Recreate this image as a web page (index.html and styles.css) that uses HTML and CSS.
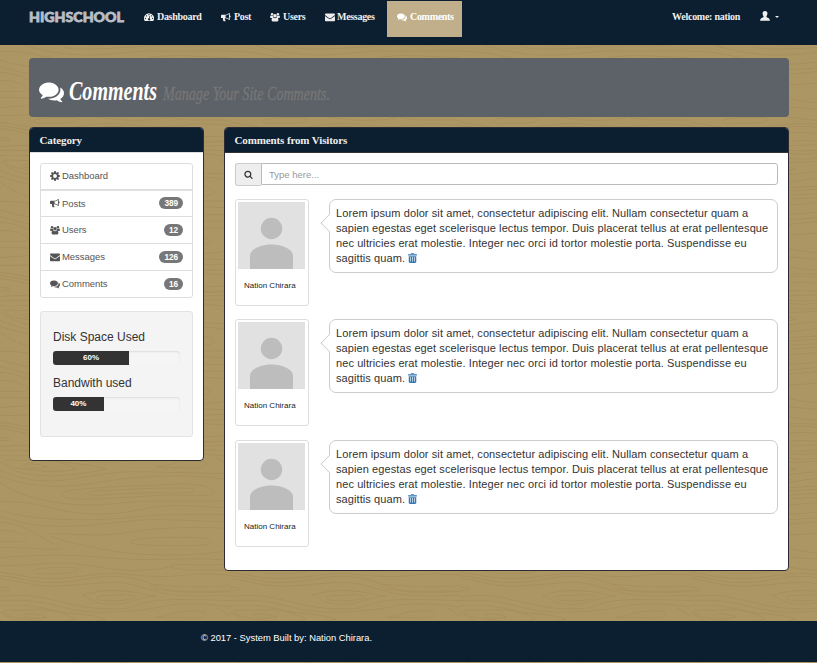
FILE: index.html
```html
<!DOCTYPE html>
<html lang="en">
<head>
<meta charset="utf-8">
<title>Comments</title>
<link rel="stylesheet" href="styles.css">
</head>
<body>
<svg class="wood" aria-hidden="true">
  <defs>
    <g id="grain">
      <path d="M0 82C60 125 140 143 230 149S400 136 460 138S630 137 690 138M0 139C90 137 130 158 220 172S380 172 450 158S620 158 690 158M0 165C80 193 190 195 280 194S430 180 510 179S620 180 690 178M0 185C60 198 80 213 180 214S380 196 450 194S620 202 690 198M0 202C70 204 100 236 150 260S195 283 160 283S60 276 0 278M0 226C50 226 85 242 83 253S30 258 0 259M690 220C590 216 480 216 400 230S270 240 200 237S145 242 172 251S320 290 400 296S620 303 690 284M390 262C390 250 470 247 520 247S630 246 632 259S590 272 540 272S395 272 390 262ZM0 308C100 299 210 298 300 306S420 315 500 313S620 310 690 316M0 331C80 334 120 323 200 325S320 348 420 346S500 325 560 328S650 330 690 326M510 337C570 350 620 343 690 346M100 350C94 341 150 337 185 337S240 338 232 346S180 356 150 356S105 358 100 350ZM0 352C70 360 100 375 180 370S300 350 380 358S500 367 560 360S640 359 690 360M0 362C60 366 100 387 180 382S300 356 380 367S480 410 560 412S650 411 690 410M0 371C60 375 90 396 170 393S290 382 340 382S430 400 480 412S590 425 690 420M690 392C600 398 550 395 500 391S445 387 460 398S530 410 690 408M0 397C20 397 35 402 30 405S10 407 0 407M247 420C300 405 340 404 390 410S430 422 467 423C410 428 390 448 340 448S280 438 247 420ZM290 428C285 420 330 422 360 420S407 422 407 426S370 438 340 438S293 436 290 428ZM0 425C90 415 120 427 180 440S270 462 340 462S410 445 460 438S600 433 690 437M0 437C100 430 150 448 200 460S300 475 390 468S480 452 530 448S640 447 690 456"/>
      <path d="M10 20C5 10 65 20 100 15S200 23 228 42C180 55 110 48 70 42S25 30 10 20ZM70 32C68 24 110 24 140 36C120 42 75 42 70 32ZM0 20C40 50 75 60 130 62S240 58 318 43C270 25 210 28 170 18S60-6 0 2M467 36C510 34 510 20 570 18S615 26 612 34S560 38 520 38S470 40 467 36ZM650 8L690 32M0 46C50 64 80 78 150 78S310 50 400 50S610 57 690 55M0 64C50 80 90 93 170 94S330 72 420 67S600 58 690 76M186 118C180 105 250 101 330 96S450 93 520 88S645 97 641 113S550 116 470 121S340 131 280 132S190 132 186 118ZM260 117C252 106 330 106 390 103S585 94 585 106S520 112 430 114S270 126 260 117Z"/>
    </g>
    <pattern id="planks" width="690" height="450" patternUnits="userSpaceOnUse" patternTransform="translate(0 5) scale(.33333)">
      <use href="#grain"/><use href="#grain" y="-450"/>
    </pattern>
  </defs>
  <rect width="100%" height="100%" fill="url(#planks)"/>
</svg>

<svg class="sprite" aria-hidden="true">
  <symbol id="comments" viewBox="0 0 1792 1792"><path d="M1408 768q0 139-94 257t-256.5 186.5-353.5 68.5q-86 0-176-16-124 88-278 128-36 9-86 16h-3q-11 0-20.5-8t-11.5-21q-1-3-1-6.5t.5-6.5 2-6l2.5-5 3.5-5.5 4-5 4.500-5 4-4.500q5-6 23-25t26-29.500 22.500-29 25-38.500 20.500-44q-124-72-195-177t-71-224q0-139 94-257t256.500-186.500 353.500-68.500 353.500 68.500 256.500 186.500 94 257zm384 256q0 120-71 224.500t-195 176.500q10 24 20.500 44t25 38.500 22.500 29 26 29.500 23 25q1 1 4 4.500t4.500 5 4 5 3.500 5.500l2.500 5 2 6 .5 6.500-1 6.500q-3 14-13 22t-22 7q-50-7-86-16-154-40-278-128-90 16-176 16-271 0-472-132 58 4 88 4 161 0 309-45t264-129q125-92 192-212t67-254q0-77-23-152 129 71 204 178t75 230z"/></symbol>
  <symbol id="search" viewBox="0 0 1792 1792"><path d="M1216 832q0-185-131.500-316.500t-316.500-131.500-316.500 131.500-131.500 316.500 131.500 316.500 316.500 131.500 316.500-131.500 131.500-316.500zm512 832q0 52-38 90t-90 38q-54 0-90-38l-343-342q-179 124-399 124-143 0-273.500-55.500t-225-150-150-225-55.500-273.500 55.500-273.500 150-225 225-150 273.500-55.500 273.500 55.500 225 150 150 225 55.500 273.500q0 220-124 399l343 343q37 37 37 90z"/></symbol>
  <symbol id="envelope" viewBox="0 0 1792 1792"><path d="M1792 710v794q0 66-47 113t-113 47h-1472q-66 0-113-47t-47-113v-794q44 49 101 87 362 246 497 345 57 42 92.500 65.500t94.500 48 110 24.500h2q51 0 110-24.500t94.500-48 92.500-65.500q170-123 498-345 57-39 100-87zm0-294q0 79-49 151t-122 123q-376 261-468 325-10 7-42.500 31t-54 38.500-52 32.500-57.500 27-50 9h-2q-23 0-50-9t-57.500-27-52-32.500-54-38.500-42.500-31q-91-64-262-182.500t-205-142.500q-62-42-117-115.500t-55-136.500q0-78 41.500-130t118.500-52h1472q65 0 112.500 47t47.500 113z"/></symbol>
  <symbol id="gauge" viewBox="0 0 16 16"><path fill-rule="evenodd" d="M8 2a8 8 0 0 0-6.800 12.200l.6.300h12.400l.6-.3A8 8 0 0 0 8 2zM8 3.300a1 1 0 1 1 0 2 1 1 0 0 1 0-2zM4 5a1 1 0 1 1 0 2 1 1 0 0 1 0-2zm8 0a1 1 0 1 1 0 2 1 1 0 0 1 0-2zM2.300 9a1 1 0 1 1 0 2 1 1 0 0 1 0-2zm11.400 0a1 1 0 1 1 0 2 1 1 0 0 1 0-2zM9 6.500l.9.2-.9 3.600a1.700 1.700 0 1 1-1-.2z"/></symbol>
  <symbol id="bullhorn" viewBox="0 0 16 16"><path fill-rule="evenodd" d="M14 1v4.500a1.500 1.500 0 0 1 0 3V13c-2.500-2-4.800-3-7.300-3.200-.9.500-.8 1.300-.3 1.800-.4.700 0 1.200 1.200 2.200-.7 1.200-3 1.200-3.800.4C3.300 12.700 2.700 11.300 3 9.700H1.500A1.500 1.500 0 0 1 0 8.200V6a1.500 1.500 0 0 1 1.500-1.500H6C8.800 4.500 11.500 3 14 1zm-1.300 2.300C11 4.500 9.200 5.300 7.300 5.600v3c1.900.3 3.700 1.100 5.400 2.300z"/></symbol>
  <symbol id="users" viewBox="0 0 17 16"><path d="M8.500 3a3 3 0 1 1 0 6 3 3 0 0 1 0-6zM3.500 1a2.200 2.200 0 1 1 0 4.500 2.200 2.200 0 0 1 0-4.500zm10 0a2.200 2.200 0 1 1 0 4.500 2.200 2.200 0 0 1 0-4.500zM1 5.500c1.400 1 2.700 1 4 .3C5 7 5.300 7.800 6 8.500 4.900 8.500 4.200 9 3.700 9.500H1.500C0 9.500 0 8.500.1 7.500zM16 5.500c-1.400 1-2.700 1-4 .3 0 1.200-.3 2-1 2.700 1.100 0 1.800.5 2.300 1h2.200c1.500 0 1.500-1 1.400-2zM5.500 9c2 1.500 4 1.500 6 0 2 0 2.800 2.200 2.800 4.300 0 1.300-.8 2.200-2 2.200H4.700c-1.200 0-2-.9-2-2.200C2.700 11.200 3.500 9 5.500 9z"/></symbol>
  <symbol id="cog" viewBox="0 0 16 16"><path fill-rule="evenodd" d="M6.800 0h2.400l.4 2.200 1.200.5 1.900-1.300 1.800 1.800-1.300 1.900.5 1.200 2.300.4v2.500l-2.300.4-.5 1.300 1.300 1.900-1.700 1.700-1.900-1.300-1.300.5L9.200 16H6.800l-.4-2.300-1.300-.5-1.900 1.300-1.700-1.700 1.300-1.900-.5-1.300L0 9.200V6.700l2.300-.4.5-1.200-1.300-1.900 1.700-1.800 1.900 1.300 1.300-.5zM8 4.900A3.100 3.100 0 1 0 8 11.100 3.100 3.100 0 0 0 8 4.900z"/></symbol>
  <symbol id="person" viewBox="0 0 16 16"><path d="M8 0c2.800 0 4 1.600 3.900 4-.1 2-.8 3.200-1.600 4.200v1.500c2.800 1.500 5.400 2 5.600 5.800H.1C.3 11.700 2.900 11.200 5.700 9.700V8.200C4.900 7.200 4.200 6 4.100 4 4 1.600 5.200 0 8 0z"/></symbol>
  <symbol id="trash" viewBox="0 0 14 16"><path fill-rule="evenodd" d="M5 0h4l1 2h4v2H0V2h4zM5 1.200L4.700 2h4.600L9 1.200zM1 5h12v9.500L11.500 16h-9L1 14.500zm2.300 1.500v7h1v-7zm3.200 0v7h1v-7zm3.200 0v7h1v-7z"/></symbol>
  <symbol id="avatar" viewBox="0 0 67 67"><path fill="#e1e1e1" d="M0 0h67v67H0z"/><circle cx="33.500" cy="26.500" r="10.700" fill="#bdbdbd"/><path fill="#bdbdbd" d="M12 67V54c0-7 11-11.500 21.500-11.500S55 47 55 54v13z"/></symbol>
</svg>

<header class="navbar">
  <svg class="brand" viewBox="0 0 96 20"><text x="0" y="14.500" textLength="95" lengthAdjust="spacingAndGlyphs">HIGHSCHOOL</text></svg>
  <nav class="menu">
    <a><svg class="icon"><use href="#gauge"/></svg><span>Dashboard</span></a>
    <a><svg class="icon"><use href="#bullhorn"/></svg><span>Post</span></a>
    <a><svg class="icon"><use href="#users"/></svg><span>Users</span></a>
    <a><svg class="icon"><use href="#envelope"/></svg><span>Messages</span></a>
    <a class="active"><svg class="icon"><use href="#comments"/></svg><span>Comments</span></a>
  </nav>
  <div class="account"><span>Welcome: nation</span><svg class="icon"><use href="#person"/></svg><i class="caret"></i></div>
</header>

<section class="banner">
  <svg class="banner-icon"><use href="#comments"/></svg>
  <svg class="title" width="94" height="36"><text x="0" y="25" textLength="88" lengthAdjust="spacingAndGlyphs">Comments</text></svg>
  <svg class="subtitle" width="180" height="36"><text x="0" y="25" textLength="167" lengthAdjust="spacingAndGlyphs">Manage Your Site Comments.</text></svg>
</section>

<main class="columns">
  <aside class="panel side">
    <h2>Category</h2>
    <ul class="list">
      <li><svg class="icon"><use href="#cog"/></svg>Dashboard</li>
      <li><svg class="icon"><use href="#bullhorn"/></svg>Posts<b>389</b></li>
      <li><svg class="icon"><use href="#users"/></svg>Users<b>12</b></li>
      <li><svg class="icon"><use href="#envelope"/></svg>Messages<b>126</b></li>
      <li><svg class="icon"><use href="#comments"/></svg>Comments<b>16</b></li>
    </ul>
    <div class="well">
      <h3>Disk Space Used</h3>
      <div class="progress"><div style="width:60%">60%</div></div>
      <h3>Bandwith used</h3>
      <div class="progress"><div style="width:40%">40%</div></div>
    </div>
  </aside>

  <section class="panel feed">
    <h2>Comments from Visitors</h2>
    <div class="search"><span><svg class="icon"><use href="#search"/></svg></span><input type="text" placeholder="Type here..."></div>
    <article class="comment">
      <figure><svg><use href="#avatar"/></svg><figcaption>Nation Chirara</figcaption></figure>
      <p>Lorem ipsum dolor sit amet, consectetur adipiscing elit. Nullam consectetur quam a<br>sapien egestas eget scelerisque lectus tempor. Duis placerat tellus at erat pellentesque<br>nec ultricies erat molestie. Integer nec orci id tortor molestie porta. Suspendisse eu<br>sagittis quam. <svg class="trash"><use href="#trash"/></svg></p>
    </article>
    <article class="comment">
      <figure><svg><use href="#avatar"/></svg><figcaption>Nation Chirara</figcaption></figure>
      <p>Lorem ipsum dolor sit amet, consectetur adipiscing elit. Nullam consectetur quam a<br>sapien egestas eget scelerisque lectus tempor. Duis placerat tellus at erat pellentesque<br>nec ultricies erat molestie. Integer nec orci id tortor molestie porta. Suspendisse eu<br>sagittis quam. <svg class="trash"><use href="#trash"/></svg></p>
    </article>
    <article class="comment">
      <figure><svg><use href="#avatar"/></svg><figcaption>Nation Chirara</figcaption></figure>
      <p>Lorem ipsum dolor sit amet, consectetur adipiscing elit. Nullam consectetur quam a<br>sapien egestas eget scelerisque lectus tempor. Duis placerat tellus at erat pellentesque<br>nec ultricies erat molestie. Integer nec orci id tortor molestie porta. Suspendisse eu<br>sagittis quam. <svg class="trash"><use href="#trash"/></svg></p>
    </article>
  </section>
</main>

<footer>© 2017 - System Built by: Nation Chirara.</footer>
</body>
</html>
```
FILE: styles.css
```css
* { box-sizing: border-box; }
body {
  margin: 0;
  height: 663px;
  overflow: hidden;
  display: flex;
  flex-direction: column;
  background: #ac9664;
  color: #333;
  font-family: "Liberation Sans", Arial, sans-serif;
}
h2, h3, p, ul, figure { margin: 0; padding: 0; }
svg { flex: none; }
.wood { position: absolute; inset: 0; width: 100%; height: 100%; z-index: -1; }
.wood path { fill: none; stroke: #a68f5c; stroke-width: 3; }
.sprite { position: absolute; width: 0; height: 0; }
.icon { width: 10px; height: 10px; fill: currentColor; }

.navbar {
  height: 45px;
  flex: none;
  display: flex;
  align-items: flex-start;
  padding: 1px 38px 0 29px;
  background: #0c1f30;
  color: #eee;
  font: bold 10px/36px "Liberation Serif", serif;
}
.brand { width: 96px; height: 20px; margin: 6px 9px 0 0; overflow: visible; }
.brand text { font: 900 14px Lato, sans-serif; fill: #b9bec6; stroke: #b9bec6; stroke-width: .8px; }
.menu { display: flex; }
.menu a { display: flex; align-items: center; gap: 3px; height: 36px; padding: 0 10px; line-height: 32px; }
.menu a span, .menu a svg { margin-bottom: 4px; }
.menu a:nth-child(1) { width: 77px; }
.menu a:nth-child(2) { width: 49px; }
.menu a:nth-child(3) { width: 55px; }
.menu a:nth-child(4) { width: 72px; }
.menu a:nth-child(5) { width: 75px; }
.menu a span { letter-spacing: -.3px; }
.menu a:nth-child(4) { gap: 2px; }
.menu .active { background: #c0af8a; color: #fff; }
.account { margin-left: auto; display: flex; align-items: center; height: 32px; }
.account span { letter-spacing: -.27px; }
.account .icon { margin: 0 5px 2px 20px; }
.caret { border: 2.500px solid transparent; border-top-color: #eee; border-bottom: 0; }

.banner {
  display: flex;
  align-items: flex-start;
  height: 59px;
  flex: none;
  margin: 13px 28px 10px 29px;
  padding: 17px 10px 0;
  border-radius: 4px;
  background: #5d6168;
}
.banner-icon { width: 25px; height: 25px; margin: 4px 5px 0 0; fill: #fff; }
.title, .subtitle { overflow: visible; }
.title text { font: italic bold 27px "Liberation Serif", serif; fill: #fff; }
.subtitle text { font: italic 18px "Liberation Serif", serif; fill: #777; stroke: #777; stroke-width: .3px; }

.columns { display: flex; align-items: flex-start; gap: 20px; padding-left: 29px; }
.panel { border: 1px solid #2b2b33; border-radius: 4px; background: #fff; overflow: hidden; }
.panel h2 {
  height: 25px;
  padding-left: 9.500px;
  background: #0c1f30;
  border-bottom: 1px solid #333;
  color: #eee;
  font: bold 11px/24px "Liberation Serif", serif;
  letter-spacing: -.12px;
}
.side { width: 175px; height: 334px; }
.side h2 { border-color: #ddd; }
.feed { width: 565px; height: 444px; }

.list { margin: 10px 10px 13px; border: 1px solid #ddd; border-radius: 3px; list-style: none; font-size: 9.500px; letter-spacing: -.05px; color: #555; }
.list li { display: flex; align-items: center; gap: 2px; height: 27px; padding: 0 9px 1px; border-top: 1px solid #ddd; }
.list li:first-child { border-top: 0; height: 26px; padding-bottom: 2px; border-bottom: 1px solid #ddd; }
.list li:nth-child(2) { height: 26px; border-top-color: #e2e2e2; }
.list b {
  margin-left: auto;
  padding: 0 5px;
  border-radius: 6px;
  background: #777;
  color: #fff;
  font-size: 8.300px;
  line-height: 12px;
  letter-spacing: -.1px;
}
.well { height: 126px; margin: 0 10px; padding: 16px 12px; border: 1px solid #e3e3e3; border-radius: 3px; background: #f4f4f4; }
.well h3 { font-size: 12px; font-weight: 400; line-height: 18px; }
.progress { height: 14px; margin: 5px 0 10px; border-radius: 3px; background: #f5f5f5; box-shadow: inset 0 1px 2px rgba(0,0,0,.1); overflow: hidden; }
.progress div { height: 100%; background: #333; color: #fff; font: bold 8px/13px "Liberation Sans", sans-serif; text-align: center; }
.progress + h3 { margin-top: -1px; }

.search { display: flex; height: 22px; margin: 10px 10px 14px; }
.search span { display: flex; align-items: center; justify-content: center; width: 26px; height: 23px; border: 1px solid #ccc; border-right: 0; border-radius: 3px 0 0 3px; background: #eee; }
.search .icon { width: 9px; height: 9px; }
.search input { flex: 1; min-width: 0; padding: 0 7px; border: 1px solid #bbb; border-radius: 0 3px 3px 0; font: 9.500px "Liberation Sans", sans-serif; outline: 0; }
.search input::placeholder { color: #999; }
.comment { display: flex; align-items: flex-start; justify-content: space-between; height: 107px; margin: 0 10px 13px; }
.comment:nth-of-type(2) { margin-bottom: 14px; }
.comment figure { width: 74px; height: 107px; padding: 2px; border: 1px solid #ddd; border-radius: 3px; }
.comment figure svg { display: block; width: 67px; height: 67px; }
.comment figcaption { padding: 12px 0 0 6px; font-size: 8px; line-height: 9px; color: #222; }
.comment p { position: relative; width: 449px; height: 74px; padding: 6px; border: 1px solid #ccc; border-radius: 7px; font-size: 11px; line-height: 15px; letter-spacing: .09px; white-space: nowrap; }
.comment p::before { content: ""; position: absolute; left: -7.500px; top: 16px; width: 13px; height: 13px; border: solid #ccc; border-width: 0 0 1px 1px; background: #fff; transform: rotate(45deg); clip-path: polygon(0 0, 100% 100%, 0 100%); }
.trash { width: 9px; height: 10px; fill: #337ab7; vertical-align: -1px; }

footer { height: 41px; flex: none; margin-top: 50px; padding-left: 201px; background: #0c1f30; color: #fff; font-size: 9.350px; line-height: 34px; }
```
